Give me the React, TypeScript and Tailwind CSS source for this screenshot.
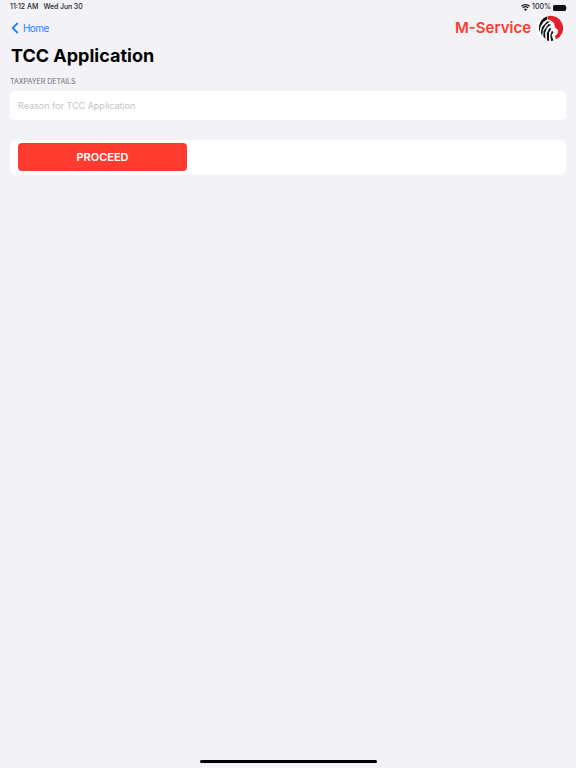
import React from "react";
import { FiChevronLeft } from "react-icons/fi";

const Logo = () => (
  <svg width="27" height="27" viewBox="0 0 27 27">
    <circle cx="13.5" cy="13.5" r="13" fill="#fff" />
    {/* red mane */}
    <path d="M12 1 A12.5 12.5 0 0 1 20 24.5 L19 21 L21.5 18.5 L22 15 L19 12.5 L18 8 L14 5 L11.5 4.5 Z" fill="#e0202a" />
    {/* black mane strokes */}
    <path d="M11.5 1.2 L11 4.5 L7.5 7 L4.5 11.5 L3.5 17 A12.5 12.5 0 0 1 11.5 1.2 Z" fill="#111" />
    <path d="M11 6.5 L14 6.5 L9.5 10 L7 15 L6 21 L4.8 17.5 L6 12 Z" fill="#111" />
    <path d="M12.5 9 L15 9.5 L11 13 L9 18 L9.5 24 L7.3 21.5 L7.5 16 Z" fill="#111" />
    <path d="M13.5 13 L15.5 13.5 L13 17.5 L13 26 L11 25.5 L10.8 18 Z" fill="#111" />
    <path d="M16 15.5 L17.5 17.5 L15.5 20 L17.5 25.5 L15 26 L14.3 20 Z" fill="#111" />
  </svg>
);

const StatusBar = () => (
  <div className="flex h-[14px] items-center justify-between pl-[10px] pr-[9px] pt-[1px] text-[7px] font-medium text-[#1c1c1e]">
    <div className="flex gap-[5px]">
      <span>11:12 AM</span>
      <span className="tracking-[-0.1px]">Wed Jun 30</span>
    </div>
    <div className="flex items-center gap-[2px]">
      <svg width="9" height="7" viewBox="0 0 18 14">
        <path d="M9 14 L6 10.5 A4.5 4.5 0 0 1 12 10.5 Z M4.5 8.7 L2.8 6.8 A9 9 0 0 1 15.2 6.8 L13.5 8.7 A6.5 6.5 0 0 0 4.5 8.7 Z M1.6 5.4 L0 3.6 A13.5 13.5 0 0 1 18 3.6 L16.4 5.4 A11 11 0 0 0 1.6 5.4 Z" fill="#111" />
      </svg>
      <span>100%</span>
      <div className="flex items-center">
        <div className="h-[6px] w-[13px] rounded-[1.5px] bg-[#111]" />
        <div className="h-[2px] w-[1px] rounded-r-sm bg-[#999]" />
      </div>
    </div>
  </div>
);

export default function App() {
  return (
    <div className="flex h-[768px] w-[576px] flex-col overflow-hidden bg-[#f2f2f7] font-['Inter','Liberation_Sans',sans-serif]">
      <StatusBar />

      <div className="flex h-[28px] items-center justify-between pl-[6px] pr-[13px]">
        <div className="flex items-center text-[#1a84ff]">
          <FiChevronLeft className="text-[18px]" strokeWidth={2.4} />
          <span className="-ml-[1px] text-[10px] tracking-[-0.6px]">Home</span>
        </div>
        <div className="flex items-center gap-[5px]">
          <span className="text-[15px] font-semibold text-[#ff3b30]">M-Service</span>
          <Logo />
        </div>
      </div>

      <h1 className="mt-[1px] pl-[11px] text-[18px] font-bold leading-[26px] text-black">TCC Application</h1>

      <p className="mt-[8px] pl-[10px] text-[7px] leading-[10px] text-[#6d6d72]">TAXPAYER DETAILS</p>

      <div className="mx-[10px] mt-[4px] flex h-[29px] items-center rounded-[5px] bg-white px-[8px] text-[9px] text-[#c4c4c6]">
        Reason for TCC Application
      </div>

      <div className="mx-[10px] mt-[20px] flex h-[35px] items-start rounded-[5px] bg-white px-[8px] pt-[3px]">
        <div className="flex h-[28px] w-[169px] items-center justify-center rounded-[4px] bg-[#ff3b30] text-[11px] font-semibold text-white">
          PROCEED
        </div>
      </div>

      <div className="mt-auto mb-[5px] h-[3px] w-[177px] self-center rounded-full bg-black" />
    </div>
  );
}
